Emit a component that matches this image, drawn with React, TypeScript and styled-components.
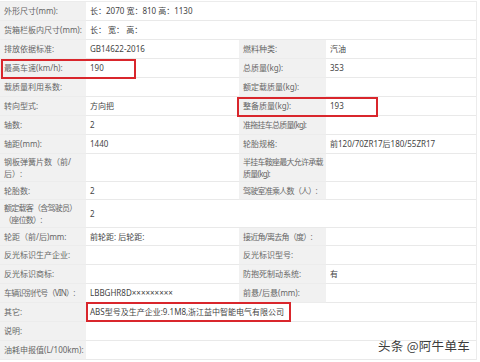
import React from "react";
import styled, { createGlobalStyle } from "styled-components";

const Global = createGlobalStyle`
  html, body { margin: 0; padding: 0; background: #fff; }
  body { font-family: "Noto Sans", "Noto Sans CJK SC", sans-serif; }
`;

const Page = styled.div`
  position: relative;
  width: 480px;
  height: 362px;
  overflow: hidden;
  padding-top: 1px;
  box-sizing: border-box;
`;

const Table = styled.div`
  width: 477px;
  border-top: 1px solid #ececec;
  border-right: 1px solid #ececec;
  box-sizing: border-box;
`;

const Row = styled.div<{ $h: number }>`
  display: grid;
  grid-template-columns: 86px 153px 87px 1fr;
  height: ${(p) => p.$h}px;
`;

const Cell = styled.div`
  display: flex;
  align-items: center;
  padding: 0 2px 0 4px;
  border-bottom: 1px solid #e9e9e9;
  font-size: 8px;
  line-height: 12px;
  white-space: nowrap;
  overflow: hidden;
`;

const Label = styled(Cell)<{ $tight?: boolean }>`
  background: #f1f1f1;
  color: #666;
  border-bottom-color: #ececec;
  letter-spacing: ${(p) => (p.$tight ? "-0.75px" : "0")};
`;

const Value = styled(Cell)<{ $span?: number }>`
  grid-column: span ${(p) => p.$span ?? 1};
  color: #444;
  background: #fff;
`;

const Mark = styled.div<{ $x: number; $y: number; $w: number }>`
  position: absolute;
  left: ${(p) => p.$x}px;
  top: ${(p) => p.$y}px;
  width: ${(p) => p.$w}px;
  height: 20px;
  border: 2px solid #d9262c;
  box-sizing: border-box;
`;

const Watermark = styled.div`
  position: absolute;
  right: 10px;
  bottom: 9px;
  font-family: "Noto Sans CJK SC", sans-serif;
  font-size: 12.5px;
  line-height: 14px;
  letter-spacing: 0.3px;
  color: #3c3c3c;
  text-shadow: 0 0 2px #fff, 0 0 2px #fff;
`;

type R = {
  h?: number;
  l1: React.ReactNode;
  v1?: string;
  l2?: React.ReactNode;
  v2?: string;
  span?: boolean;
  t1?: boolean;
  t2?: boolean;
};

const rows: R[] = [
  { l1: "外形尺寸(mm):", v1: "长：2070 宽：810 高：1130", span: true },
  { l1: "货箱栏板内尺寸(mm):", v1: "长：  宽：  高：", span: true },
  { l1: "排放依据标准:", v1: "GB14622-2016", l2: "燃料种类:", v2: "汽油" },
  { l1: "最高车速(km/h):", v1: "190", l2: "总质量(kg):", v2: "353" },
  { l1: "载质量利用系数:", l2: "额定载质量(kg):" },
  { l1: "转向型式:", v1: "方向把", l2: "整备质量(kg):", v2: "193" },
  { l1: "轴数:", v1: "2", l2: "准拖挂车总质量(kg):", t2: true },
  { l1: "轴距(mm):", v1: "1440", l2: "轮胎规格:", v2: "前120/70ZR17后180/55ZR17" },
  {
    h: 28,
    l1: (<>钢板弹簧片数（前/<br />后）:</>),
    l2: (<>半挂车鞍座最大允许承载<br />质量(kg):</>),
    t2: true,
  },
  { h: 18, l1: "轮胎数:", v1: "2", l2: "驾驶室准乘人数（人）:", t2: true },
  { h: 28, l1: (<>额定载客（含驾驶员）<br />（座位数）:</>), v1: "2", span: true, t1: true },
  { h: 18, l1: "轮距（前/后)mm:", v1: "前轮距: 后轮距:", l2: "接近角/离去角（度）:", t2: true },
  { l1: "反光标识生产企业:", l2: "反光标识型号:" },
  { l1: "反光标识商标:", l2: "防抱死制动系统:", v2: "有" },
  { l1: "车辆识别代号（VIN）:", v1: "LBBGHR8D×××××××××", l2: "前悬/后悬(mm):", t1: true },
  { l1: "其它:", v1: "ABS型号及生产企业:9.1M8,浙江益中智能电气有限公司", span: true },
  { l1: "说明:", span: true },
  { l1: "油耗申报值(L/100km):", span: true },
];

const App: React.FC = () => (
  <Page>
    <Global />
    <Table>
      {rows.map((r, i) => (
        <Row key={i} $h={r.h ?? 19}>
          <Label $tight={r.t1}>
            <span>{r.l1}</span>
          </Label>
          {r.span ? (
            <Value $span={3}>{r.v1}</Value>
          ) : (
            <>
              <Value>{r.v1}</Value>
              <Label $tight={r.t2}>
                <span>{r.l2}</span>
              </Label>
              <Value>{r.v2}</Value>
            </>
          )}
        </Row>
      ))}
    </Table>
    <Mark $x={1} $y={59} $w={135} />
    <Mark $x={237} $y={97} $w={141} />
    <Mark $x={86} $y={302} $w={205} />
    <Watermark>头条 @阿牛单车</Watermark>
  </Page>
);

export default App;
